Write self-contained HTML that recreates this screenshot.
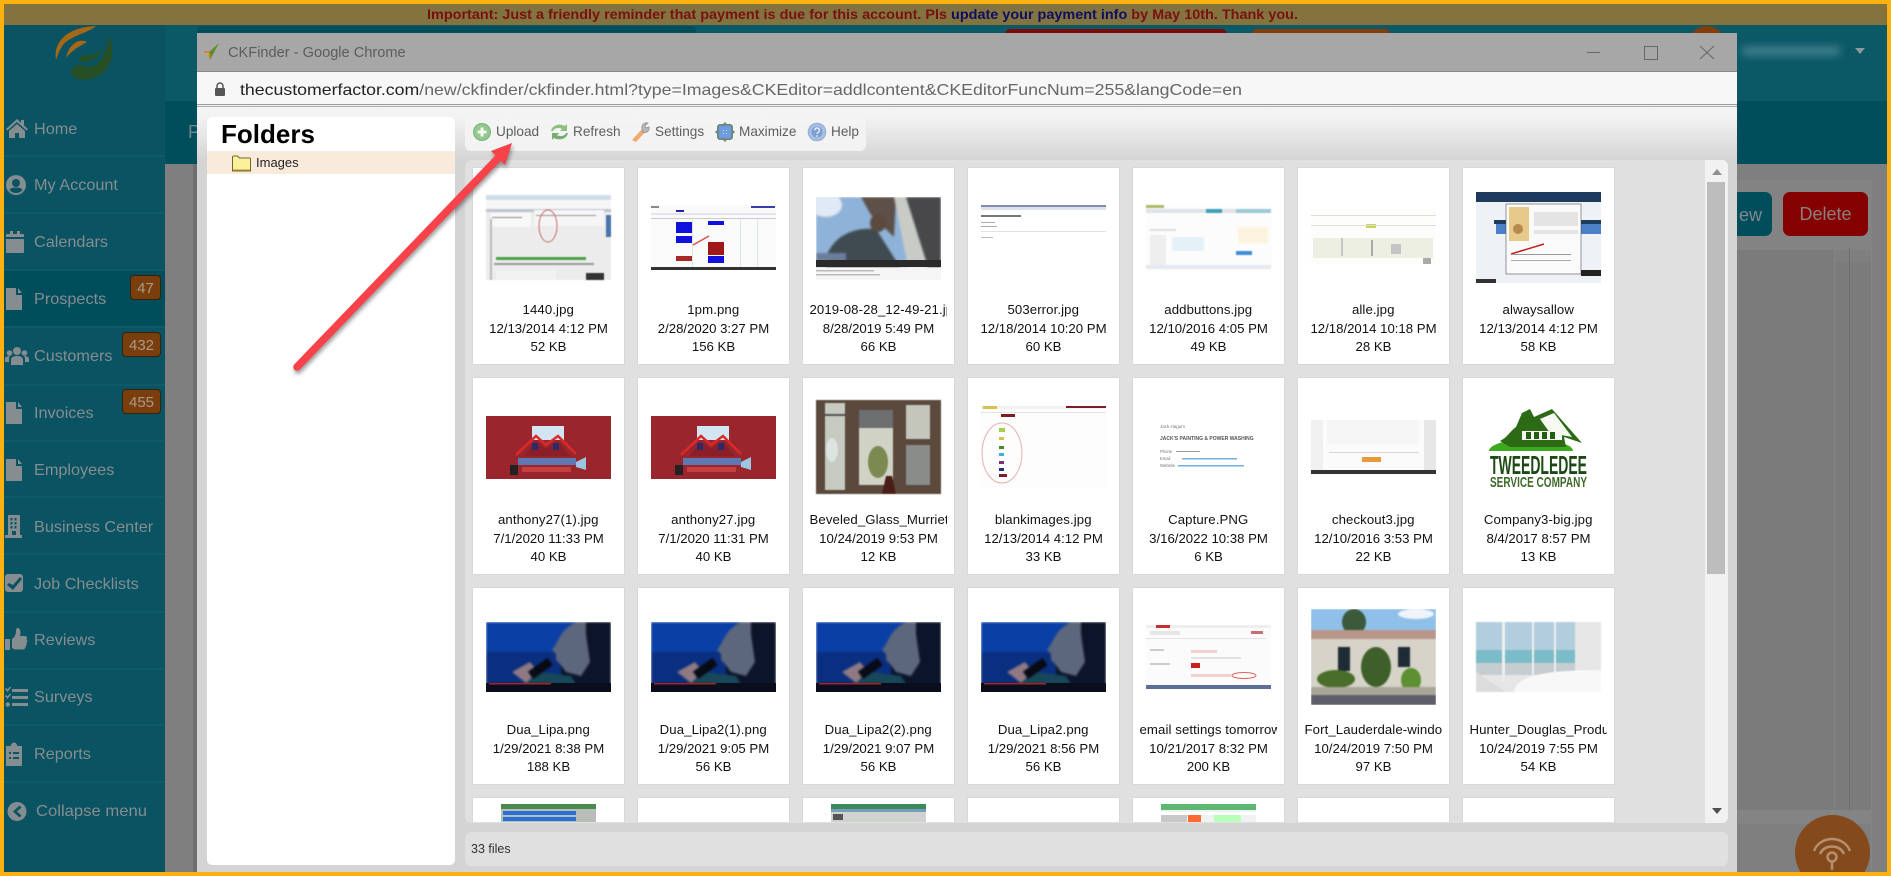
<!DOCTYPE html>
<html><head><meta charset="utf-8"><title>CKFinder</title>
<style>
html,body{margin:0;padding:0;width:1891px;height:876px;overflow:hidden;background:#7f7f7f;font-family:"Liberation Sans",sans-serif}
.a{position:absolute}
#root{position:absolute;left:0;top:0;width:1891px;height:876px;overflow:hidden}
.nav{position:absolute;left:34px;font-size:16px;line-height:20px;color:#858d90;white-space:nowrap;transform:scaleX(1.015);transform-origin:left}
.sep{position:absolute;left:4px;width:161px;height:2px;background:#0e5a69}
.ic{position:absolute;left:5px;width:24px;height:24px;fill:#858d90}
.bd{position:absolute;background:#7a3e0c;border:1px solid #33240e;border-radius:4px;color:#a89a8a;font-size:15px;line-height:25px;text-align:center;box-sizing:border-box;height:25px}
.tb{position:absolute;top:124px;font-size:13.6px;line-height:16px;color:#5e5e5e;white-space:nowrap}
.c{position:absolute;width:151.5px;height:196px;background:#fff;box-shadow:0 0 0 .5px #d0d0d0;text-align:center;font-size:13.2px;color:#111;line-height:16px}
.c svg{position:absolute;left:13.5px}
.r4{height:26px;overflow:hidden}
.n{position:absolute;left:7px;width:137.5px;top:134px;white-space:nowrap;overflow:hidden;letter-spacing:.1px}
.d{position:absolute;left:0;width:152px;top:153px;white-space:nowrap}
.s{position:absolute;left:0;width:152px;top:171px}
</style></head>
<body><div id="root">
<!-- page behind -->
<div class="a" style="left:0;top:0;width:1891px;height:876px;background:#7f7f7f"></div>
<div class="a" style="left:4px;top:25px;width:1883px;height:76px;background:#0b5867"></div>
<div class="a" style="left:165px;top:101px;width:1722px;height:63px;background:#004d5c"></div>
<div class="a" style="left:4px;top:25px;width:161px;height:847px;background:#0a5362"></div>
<div class="a" style="left:197px;top:26px;width:499px;height:8px;background:#004d5c;border-radius:4px 4px 0 0"></div>
<div class="a" style="left:1005px;top:29px;width:222px;height:6px;background:#7c0b0b;border-radius:5px 5px 0 0"></div>
<div class="a" style="left:1252px;top:29px;width:138px;height:6px;background:#843c08;border-radius:5px 5px 0 0"></div>
<div class="a" style="left:1688px;top:26px;width:38px;height:38px;background:#843c08;border-radius:50%"></div>
<div class="a" style="left:1742px;top:46px;width:98px;height:10px;background:#3d7c88;filter:blur(4px)"></div>
<svg class="a" style="left:1854px;top:47px" width="12" height="8"><path d="M1 1H11L6 7Z" fill="#8f9a9e"/></svg>
<div class="a" style="left:188px;top:122px;font-size:18px;line-height:20px;color:#71878d">P</div>
<!-- right side of page -->
<div class="a" style="left:1737px;top:180px;width:135px;height:70px;background:#838383"></div>
<div class="a" style="left:1737px;top:250px;width:98px;height:12px;background:#7b7b7b"></div>
<div class="a" style="left:1737px;top:262px;width:135px;height:550px;background:#7b7b7b"></div>
<div class="a" style="left:1834px;top:248px;width:1px;height:560px;background:#858585"></div>
<div class="a" style="left:1849px;top:248px;width:1px;height:624px;background:#6f6f6f"></div>
<div class="a" style="left:1871px;top:248px;width:1px;height:624px;background:#858585"></div>
<div class="a" style="left:1737px;top:810px;width:135px;height:14px;background:#848484"></div>
<div class="a" style="left:1700px;top:192px;width:72px;height:44px;background:#004d5c;border-radius:7px"></div>
<div class="a" style="left:1737px;top:204px;font-size:18px;line-height:22px;width:25px;text-align:right;color:#80898b;overflow:hidden;white-space:nowrap">ew</div>
<div class="a" style="left:1783px;top:192px;width:85px;height:44px;background:#850000;border-radius:7px;color:#8f7f7f;font-size:18px;line-height:44px;text-align:center">Delete</div>
<!-- left column shading -->
<div class="a" style="left:193px;top:164px;width:4px;height:708px;background:#6e6e6e"></div>
<!-- logo -->
<svg class="a" style="left:0;top:0" width="130" height="90">
<path d="M56 60C53 42 67 27 96 26C88 33 70 36 63 45C60 49 58 54 56 60Z" fill="#a56817"/>
<path d="M66 58C68 46 78 37 87 42C80 46 72 50 66 58Z" fill="#a56817"/>
<path d="M108 35C116 50 113 68 98 76C88 82 72 81 71 72C71 66 78 63 84 66C96 70 108 56 108 35Z" fill="#254f24"/>
<path d="M102 48C100 58 92 62 82 62C78 61 78 56 84 55C92 56 98 54 102 48Z" fill="#254f24"/>
</svg>
<!-- sidebar -->
<div class="a" style="left:4px;top:270px;width:161px;height:56px;background:#004d5c"></div>
<div class="sep" style="top:155px"></div><div class="sep" style="top:212px"></div><div class="sep" style="top:269px"></div><div class="sep" style="top:326px"></div><div class="sep" style="top:384px"></div><div class="sep" style="top:440px"></div><div class="sep" style="top:496px"></div><div class="sep" style="top:553px"></div><div class="sep" style="top:611px"></div><div class="sep" style="top:668px"></div><div class="sep" style="top:724px"></div><div class="sep" style="top:781px"></div>

<svg class="ic" style="top:116px" viewBox="0 0 24 24"><path d="M12 3L1 13l1.500 1.500L12 6l9.500 8.500L23 13l-4-3.600V4h-3v2.700zM4 15v7h6v-5h4v5h6v-7l-8-7z"/></svg>
<svg class="ic" style="top:173px;left:4px" viewBox="0 0 24 24"><path fill-rule="evenodd" d="M12 2a10 10 0 100 20 10 10 0 000-20zm0 4a4 4 0 110 8 4 4 0 010-8zM5.500 17c1-2 3.500-2.500 6.500-2.500s5.500.5 6.500 2.500a8.500 8.500 0 01-13 0z"/></svg>
<svg class="ic" style="top:230px" viewBox="0 0 24 24"><path d="M1 9h18v13a1 1 0 01-1 1H2a1 1 0 01-1-1zM1 7V5a1 1 0 011-1h3V1h3v3h4V1h3v3h3a1 1 0 011 1v2z"/></svg>
<svg class="ic" style="top:287px" viewBox="0 0 24 24"><path d="M1 1h10v7h6v15H1zM13 1l4 5h-4z"/></svg>
<svg class="ic" style="top:345px" viewBox="0 0 24 24"><circle cx="12" cy="6" r="4"/><circle cx="4.500" cy="8" r="2.800"/><circle cx="19.500" cy="8" r="2.800"/><path d="M6 20v-5c0-3 3-4 6-4s6 1 6 4v5zM0 17v-3c0-2 2-3 5-3-1 1-1 2-1 6zM24 17v-3c0-2-2-3-5-3 1 1 1 2 1 6z"/></svg>
<svg class="ic" style="top:401px" viewBox="0 0 24 24"><path d="M1 1h10v7h6v15H1zM13 1l4 5h-4z"/></svg>
<svg class="ic" style="top:458px" viewBox="0 0 24 24"><path d="M1 1h10v7h6v15H1zM13 1l4 5h-4z"/></svg>
<svg class="ic" style="top:515px" viewBox="0 0 24 24"><path fill-rule="evenodd" d="M3 0h12v20h2v3H0v-3h3zM5.500 3v2.500h2V3zm4 0v2.500h2V3zm-4 4v2.500h2V7zm4 0v2.500h2V7zm-4 4v2.500h2V11zm4 0v2.500h2V11zM7 16v4h4v-4z"/></svg>
<svg class="ic" style="top:571px" viewBox="0 0 24 24"><path fill-rule="evenodd" d="M3 3h12a3 3 0 013 3v12a3 3 0 01-3 3H3a3 3 0 01-3-3V6a3 3 0 013-3zm1 9l-2 2 6 5L17 8l-2-2-7 8z"/></svg>
<svg class="ic" style="top:628px" viewBox="0 0 24 24"><path d="M0 11h5v11H0zM7 11c3-2 4-5 4-8 0-2 1-3 2-3 2 0 3 3 2 8h5c2 0 2.500 2 1.500 3.500 1 1 1 2.500 0 3.500.5 1.500 0 2.500-1 3.500 0 2-1 3-3 3H11c-2 0-3-1-4-1.500z"/></svg>
<svg class="ic" style="top:685px" viewBox="0 0 24 24"><path d="M7 4h16v3H7zM7 11h16v3H7zM7 18h16v3H7z"/><path d="M0 4l1-1 1.500 1.500L5 1.500 6 2.500 2.500 7zM0 11l1-1 1.500 1.500L5 8.500 6 9.500 2.500 14z"/><circle cx="2.800" cy="19.500" r="2.200"/></svg>
<svg class="ic" style="top:742px" viewBox="0 0 24 24"><path fill-rule="evenodd" d="M1 4h4.500c.5-2 2-3.500 3.500-3.500S12 2 12.500 4H17v20H1zM4 10v2h2v-2zm4 0v2h6v-2zm-4 5v2h2v-2zm4 0v2h6v-2z"/></svg>
<svg class="ic" style="top:799px" viewBox="0 0 24 24"><path fill-rule="evenodd" d="M12 3a9.500 9.500 0 100 19 9.500 9.500 0 000-19zm2.500 3.500l2 2-4.500 4 4.500 4-2 2-6.500-6z"/></svg>

<div class="nav" style="top:120px">Home</div>
<div class="nav" style="top:176px">My Account</div>
<div class="nav" style="top:233px">Calendars</div>
<div class="nav" style="top:290px">Prospects</div>
<div class="nav" style="top:347px">Customers</div>
<div class="nav" style="top:404px">Invoices</div>
<div class="nav" style="top:461px">Employees</div>
<div class="nav" style="top:518px">Business Center</div>
<div class="nav" style="top:575px">Job Checklists</div>
<div class="nav" style="top:631px">Reviews</div>
<div class="nav" style="top:688px">Surveys</div>
<div class="nav" style="top:745px">Reports</div>
<div class="nav" style="top:802px;left:36px;transform:scaleX(1.04)">Collapse menu</div>
<div class="bd" style="left:130px;top:275px;width:31px">47</div>
<div class="bd" style="left:122px;top:332px;width:39px">432</div>
<div class="bd" style="left:122px;top:389px;width:39px">455</div>

<!-- chat bubble -->
<div class="a" style="left:1795px;top:815px;width:75px;height:57px;overflow:hidden"><div class="a" style="left:0;top:0;width:75px;height:75px;background:#854a1c;border-radius:50%"></div></div>
<svg class="a" style="left:1810px;top:832px" width="44" height="40" fill="none" stroke="#b58f6f" stroke-width="2.500"><path d="M4 19C10 3 34 3 40 19"/><path d="M10 22C14 12 30 12 34 22"/><circle cx="22" cy="25" r="4.500"/><path d="M22 30V38"/></svg>

<!-- notice bar -->
<div class="a" style="left:4px;top:4px;width:1883px;height:21px;background:#83733f"></div>
<svg class="a" style="left:0;top:0" width="1891" height="30"><text x="427" y="19" font-family="'Liberation Sans',sans-serif" font-size="13.500" font-weight="700" fill="#7a1010" textLength="871" lengthAdjust="spacingAndGlyphs">Important: Just a friendly reminder that payment is due for this account. Pls <tspan fill="#0c0e62">update your payment info</tspan> by May 10th. Thank you.</text></svg>

<!-- modal -->
<div class="a" style="left:197px;top:33px;width:1540px;height:839px;background:#d4d4d4"></div>
<div class="a" style="left:197px;top:33px;width:1540px;height:39px;background:#a7a7a7"></div>
<div class="a" style="left:197px;top:71px;width:1540px;height:1px;background:#8a8a8a"></div>
<div class="a" style="left:197px;top:72px;width:1540px;height:32px;background:#f7f7f7"></div>
<div class="a" style="left:197px;top:104px;width:1540px;height:1px;background:#9a9a9a"></div>
<div class="a" style="left:197px;top:105px;width:1540px;height:1px;background:#f2f2f2"></div>
<div class="a" style="left:197px;top:106px;width:1540px;height:1px;background:#ababab"></div>
<div class="a" style="left:197px;top:107px;width:1540px;height:55px;background:linear-gradient(#f5f5f5,#f2f2f2 20%,#d3d3d3)"></div>
<!-- title bar -->
<svg class="a" style="left:202px;top:42px" width="20" height="20"><path d="M17 1L8 18 6 11z" fill="#5f8c2a"/><path d="M1 9l7 1-2 3z" fill="#d4762a"/><path d="M6 12l2 6 1-6z" fill="#b98a2a"/><path d="M2 11l5 0 0 2z" fill="#e3b53a"/></svg>
<div class="a" style="left:228px;top:44px;font-size:14.600px;line-height:18px;color:#5c5c5c;white-space:nowrap">CKFinder - Google Chrome</div>
<svg class="a" style="left:1580px;top:40px" width="145" height="24" fill="none" stroke="#666" stroke-width="1"><path d="M7 12.500H20"/><rect x="64.500" y="6.500" width="13" height="13"/><path d="M120 6L134 19M134 6L120 19"/></svg>
<!-- address -->
<svg class="a" style="left:214px;top:81px" width="12" height="16"><path d="M3 7V5a3 3 0 016 0v2" fill="none" stroke="#555" stroke-width="1.500"/><rect x="1" y="7" width="10" height="8" rx="1" fill="#555"/></svg>
<svg class="a" style="left:0;top:70px" width="1300" height="36"><text x="240" y="25" font-family="'Liberation Sans',sans-serif" font-size="16" fill="#666" textLength="1002" lengthAdjust="spacingAndGlyphs"><tspan fill="#222">thecustomerfactor.com</tspan>/new/ckfinder/ckfinder.html?type=Images&amp;CKEditor=addlcontent&amp;CKEditorFuncNum=255&amp;langCode=en</text></svg>
<!-- folders -->
<div class="a" style="left:207px;top:117px;width:248px;height:748px;background:#fff;border-radius:5px"></div>
<div class="a" style="left:221px;top:119px;font-size:26px;line-height:30px;font-weight:700;color:#000">Folders</div>
<div class="a" style="left:207px;top:151px;width:248px;height:23px;background:#f9ebdc"></div>
<svg class="a" style="left:231px;top:153px" width="22" height="20"><path d="M1.500 18V4a1 1 0 011-1h4l2 2h10a1 1 0 011 1v12z" fill="#fbf19c" stroke="#6f6a2a"/><path d="M2 17h17" stroke="#b39a2a"/></svg>
<div class="a" style="left:256px;top:155px;font-size:13px;line-height:16px;color:#222">Images</div>
<!-- toolbar -->
<div class="a" style="left:465px;top:116px;width:401px;height:35px;background:#f3f3f3;opacity:.95;border-radius:6px"></div>
<svg class="a" style="left:472px;top:122px" width="20" height="20"><circle cx="10" cy="10" r="8.500" fill="#93c98f" stroke="#7cb37c"/><path d="M10 5.500v9M5.500 10h9" stroke="#f1f8ef" stroke-width="3"/></svg>
<div class="tb" style="left:496px">Upload</div>
<svg class="a" style="left:549px;top:122px" width="21" height="20"><path d="M2 9C3 3 11 1 16 4l2-2v7h-7l2-2C10 5 5 6 4 9z" fill="#8cc080"/><path d="M19 11C18 17 10 19 5 16l-2 2v-7h7l-2 2c3 2 8 1 9-2z" fill="#79ad72"/></svg>
<div class="tb" style="left:573px">Refresh</div>
<svg class="a" style="left:630px;top:121px" width="22" height="22"><path d="M2 19L13 7l3 3L6 21z" fill="#f3a86e"/><path d="M12 8c-1-4 2-7 6-6l-3 3 1 2 3-1c1 3-2 7-6 5z" fill="#b8b8b8" stroke="#8a8a8a" stroke-width=".7"/></svg>
<div class="tb" style="left:655px">Settings</div>
<svg class="a" style="left:715px;top:122px" width="20" height="20"><path d="M10 0l2 2h4l2 2v4l2 2-2 2v4l-2 2h-4l-2 2-2-2H4l-2-2v-4L0 10l2-2V4l2-2h4z" fill="#6f8a84"/><rect x="4" y="4" width="12" height="12" fill="#6f9ce0"/><path d="M8 8h1v1H8zM11 8h1v1h-1zM8 11h1v1H8zM11 11h1v1h-1z" fill="#cfe0fa"/></svg>
<div class="tb" style="left:739px">Maximize</div>
<svg class="a" style="left:807px;top:122px" width="20" height="20"><circle cx="10" cy="10" r="8.800" fill="#a6c0e2" stroke="#8fadd4"/><circle cx="10" cy="10" r="5.500" fill="#7d9fcf"/><path d="M7.800 8.200a2.300 2.300 0 113.500 2c-.8.500-1.300.9-1.300 1.800" fill="none" stroke="#e9f0fa" stroke-width="1.400"/><circle cx="10" cy="14" r=".9" fill="#e9f0fa"/></svg>
<div class="tb" style="left:831px">Help</div>
<!-- files panel -->
<div class="a" style="left:465px;top:160px;width:1263px;height:663px;background:#e0e0e0;border-radius:6px;overflow:hidden">
<div class="a" style="left:1240px;top:0;width:23px;height:663px;background:#f1f1f1"></div>
<div class="a" style="left:1242px;top:22px;width:18px;height:392px;background:#bdbdbd"></div>
<svg class="a" style="left:1246px;top:8px" width="12" height="8"><path d="M1 7L6 1 11 7Z" fill="#8f8f8f"/></svg>
<svg class="a" style="left:1246px;top:647px" width="12" height="8"><path d="M1 1L6 7 11 1Z" fill="#505050"/></svg>
</div>
<div class="a" style="left:465px;top:160px;width:1240px;height:662px;overflow:hidden">

<!-- ROW 1 -->
<div class="c" style="left:7.500px;top:8px"><svg style="top:27px;filter:blur(.4px)" width="125" height="85"><rect width="125" height="85" fill="#ececec"/><rect width="125" height="5" fill="#cfdcea"/><rect y="5" width="125" height="9" fill="#f6f6f6"/><rect x="0" y="14" width="125" height="3" fill="#bfc6ce"/><rect x="5" y="18" width="40" height="14" fill="#f8f8f8"/><rect x="48" y="15" width="70" height="16" fill="#f5f5f5"/><rect x="50" y="20" width="60" height="1" fill="#999"/><rect x="6" y="22" width="30" height="1" fill="#888"/><ellipse cx="62" cy="31" rx="9" ry="16" fill="none" stroke="#c96a6a" stroke-width="1"/><rect x="120" y="20" width="5" height="22" fill="#4a74ac"/><rect x="4" y="24" width="2" height="61" fill="#bbb"/><rect x="10" y="62" width="90" height="3" fill="#4aa14a"/><rect x="8" y="68" width="100" height="2" fill="#999"/><rect x="10" y="75" width="60" height="10" fill="#f2f2f2"/><rect x="100" y="78" width="18" height="7" fill="#333"/></svg><div class="n">1440.jpg</div><div class="d">12/13/2014 4:12 PM</div><div class="s">52 KB</div></div>
<div class="c" style="left:172.500px;top:8px"><svg style="top:37px" width="125" height="65"><rect width="125" height="65" fill="#fafafa"/><rect x="100" y="1" width="24" height="2" fill="#3c3ca8"/><rect x="0" y="1" width="8" height="2" fill="#888"/><rect x="25" y="5" width="8" height="2" fill="#2222aa"/><rect y="8" width="125" height="2" fill="#e4e4ee"/><rect y="13" width="125" height="1" fill="#ccc"/><rect x="25" y="17" width="16" height="11" fill="#1111dd"/><rect x="25" y="31" width="16" height="7" fill="#1111dd"/><rect x="57" y="16" width="16" height="4" fill="#1111dd"/><rect x="57" y="37" width="16" height="13" fill="#a01818"/><rect x="57" y="51" width="16" height="7" fill="#1111dd"/><rect x="25" y="51" width="16" height="5" fill="#a82828"/><rect x="41" y="14" width="1" height="48" fill="#dde8dd"/><rect x="89" y="14" width="1" height="48" fill="#dde8dd"/><rect x="106" y="14" width="1" height="48" fill="#dde8dd"/><rect y="62" width="125" height="3" fill="#333"/><path d="M42 40L58 31" stroke="#e05050" stroke-width="1.500"/></svg><div class="n">1pm.png</div><div class="d">2/28/2020 3:27 PM</div><div class="s">156 KB</div></div>
<div class="c" style="left:337.500px;top:8px"><svg style="top:29px" width="125" height="83"><g style="filter:blur(1px)"><rect width="125" height="70" fill="#8fb2d8"/><ellipse cx="10" cy="8" rx="16" ry="12" fill="#dfeaf5"/><path d="M45 0H80L78 40 55 18z" fill="#5d5048"/><path d="M78 0H90L112 70H92z" fill="#c9cbc6"/><path d="M90 0H125V70H112z" fill="#48484a"/><path d="M10 60C18 38 38 30 60 32L84 70H10z" fill="#3f4b50"/><ellipse cx="62" cy="26" rx="8" ry="9" fill="#5a4a40"/><rect x="0" y="56" width="30" height="8" fill="#6b7f9c"/></g><rect y="63" width="125" height="7" fill="#2a2a2a"/><rect y="71" width="125" height="12" fill="#f5f5f5"/><rect y="73" width="58" height="1.500" fill="#bbb"/><rect y="77" width="64" height="1.500" fill="#bbb"/></svg><div class="n">2019-08-28_12-49-21.jpg</div><div class="d">8/28/2019 5:49 PM</div><div class="s">66 KB</div></div>
<div class="c" style="left:502.500px;top:8px"><svg style="top:37px" width="125" height="40"><rect width="125" height="2" fill="#5f6f9a" opacity=".8"/><rect y="2" width="125" height="3" fill="#dbe2ec"/><rect y="10" width="40" height="2" fill="#777"/><rect y="17" width="14" height="1" fill="#aaa"/><rect y="21" width="16" height="1" fill="#aaa"/><rect y="26" width="125" height="1" fill="#e2e2e2"/><rect y="32" width="12" height="1" fill="#bbb"/></svg><div class="n">503error.jpg</div><div class="d">12/18/2014 10:20 PM</div><div class="s">60 KB</div></div>
<div class="c" style="left:667.500px;top:8px"><svg style="top:37px;filter:blur(.4px)" width="125" height="65"><rect width="125" height="65" fill="#fcfcfc"/><rect x="0" width="18" height="3" fill="#a8bc6a"/><rect y="4" width="125" height="4" fill="#dfe3e8"/><rect x="60" y="4" width="16" height="4" fill="#3fa0b8"/><rect x="90" y="4" width="35" height="4" fill="#9ccad6"/><rect x="4" y="24" width="26" height="2" fill="#ddd"/><rect x="4" y="30" width="16" height="30" fill="#eeeeee"/><rect x="26" y="32" width="32" height="14" fill="#e4f2f8"/><rect x="92" y="22" width="30" height="16" fill="#fdf4de"/><rect x="90" y="46" width="16" height="4" fill="#3f90d8"/><rect y="60" width="125" height="4" fill="#e4eaef"/></svg><div class="n">addbuttons.jpg</div><div class="d">12/10/2016 4:05 PM</div><div class="s">49 KB</div></div>
<div class="c" style="left:832.500px;top:8px"><svg style="top:42px" width="125" height="54"><rect width="125" height="54" fill="#fdfdfb"/><rect y="5" width="125" height="1" fill="#ddd"/><rect x="55" y="14" width="10" height="4" fill="#c8d45a"/><rect y="15" width="125" height="1" fill="#ddd"/><rect x="2" y="28" width="120" height="20" fill="#edefe2"/><rect x="30" y="28" width="2" height="18" fill="#c6c6c6"/><rect x="60" y="30" width="2" height="16" fill="#aaa"/><rect x="80" y="34" width="10" height="10" fill="#c4c4c4"/><rect x="112" y="48" width="8" height="6" fill="#aaa"/></svg><div class="n">alle.jpg</div><div class="d">12/18/2014 10:18 PM</div><div class="s">28 KB</div></div>
<div class="c" style="left:997.500px;top:8px"><svg style="top:24px;filter:blur(.3px)" width="125" height="91"><rect width="125" height="91" fill="#eef2f7"/><rect width="125" height="10" fill="#1e3a5c"/><rect x="18" y="28" width="107" height="4" fill="#1e3a5c"/><rect x="20" y="32" width="105" height="10" fill="#4a80c8"/><rect x="30" y="12" width="75" height="70" fill="#fafafa" stroke="#555" stroke-width=".6"/><rect x="33" y="15" width="20" height="34" fill="#e8c98c"/><circle cx="42" cy="37" r="5" fill="#b58a4a"/><rect x="58" y="20" width="44" height="14" fill="#e4e4e4"/><rect x="58" y="38" width="44" height="4" fill="#e4e4e4"/><path d="M35 62L68 52" stroke="#c02020" stroke-width="1.500"/><rect x="35" y="62" width="60" height="1" fill="#999"/><rect x="35" y="68" width="60" height="1" fill="#aaa"/><rect y="87" width="20" height="4" fill="#333"/><rect x="105" y="78" width="20" height="6" fill="#222"/></svg><div class="n">alwaysallow</div><div class="d">12/13/2014 4:12 PM</div><div class="s">58 KB</div></div>

<!-- ROW 2 -->
<div class="c" style="left:7.500px;top:218px"><svg style="top:38px" width="125" height="63"><rect width="125" height="63" fill="#98262c"/><path d="M46 10h32v14H46z" fill="#d3e5f3" rx="6"/><path d="M30 39L50 20 60 29 72 20 90 38" fill="none" stroke="#e02828" stroke-width="2.500"/><path d="M38 40L50 25 60 33 72 25 84 40z" fill="#8a1f2a"/><rect x="46" y="27" width="6" height="7" fill="#2b2a6a"/><rect x="67" y="27" width="6" height="7" fill="#2b2a6a"/><rect x="32" y="42" width="58" height="7" fill="#5e78b4"/><rect x="36" y="51" width="49" height="5" fill="#c54040"/><path d="M90 46l10-5v13l-10-3z" fill="#9cc6e0"/><rect x="24" y="49" width="8" height="10" fill="#222"/></svg><div class="n">anthony27(1).jpg</div><div class="d">7/1/2020 11:33 PM</div><div class="s">40 KB</div></div>
<div class="c" style="left:172.500px;top:218px"><svg style="top:38px" width="125" height="63"><rect width="125" height="63" fill="#98262c"/><path d="M46 10h32v14H46z" fill="#d3e5f3" rx="6"/><path d="M30 39L50 20 60 29 72 20 90 38" fill="none" stroke="#e02828" stroke-width="2.500"/><path d="M38 40L50 25 60 33 72 25 84 40z" fill="#8a1f2a"/><rect x="46" y="27" width="6" height="7" fill="#2b2a6a"/><rect x="67" y="27" width="6" height="7" fill="#2b2a6a"/><rect x="32" y="42" width="58" height="7" fill="#5e78b4"/><rect x="36" y="51" width="49" height="5" fill="#c54040"/><path d="M90 46l10-5v13l-10-3z" fill="#9cc6e0"/><rect x="24" y="49" width="8" height="10" fill="#222"/></svg><div class="n">anthony27.jpg</div><div class="d">7/1/2020 11:31 PM</div><div class="s">40 KB</div></div>
<div class="c" style="left:337.500px;top:218px"><svg style="top:22px;filter:blur(.6px)" width="125" height="94"><rect width="125" height="94" fill="#5a493c"/><rect x="9" y="3" width="20" height="87" fill="#c6cac0"/><rect x="9" y="14" width="20" height="2" fill="#555"/><rect x="43" y="10" width="34" height="75" fill="#d0d2c6"/><rect x="43" y="10" width="34" height="18" fill="#6c6e70"/><rect x="90" y="5" width="24" height="34" fill="#c4c6bc"/><rect x="90" y="45" width="24" height="40" fill="#8a8c8a"/><ellipse cx="62" cy="62" rx="10" ry="16" fill="#7c8a52"/><ellipse cx="16" cy="50" rx="6" ry="12" fill="#dbe4e0"/><path d="M66 94l4-18 6 0 4 18z" fill="#4a1e16"/></svg><div class="n">Beveled_Glass_Murrieta.jpg</div><div class="d">10/24/2019 9:53 PM</div><div class="s">12 KB</div></div>
<div class="c" style="left:502.500px;top:218px"><svg style="top:28px" width="125" height="81"><rect width="125" height="81" fill="#fdfdfd"/><rect width="125" height="3" fill="#f1f1f1"/><rect x="2" y="0" width="14" height="3" fill="#d8c050"/><rect x="20" y="8" width="14" height="3" fill="#7c1c2a"/><rect x="85" y="0" width="40" height="2" fill="#7c1c2a"/><rect y="6" width="125" height="1" fill="#e3e3e3"/><ellipse cx="21" cy="47" rx="20" ry="30" fill="none" stroke="#e6b0b0" stroke-width="1"/><rect x="18" y="22" width="6" height="4" fill="#a8d048"/><rect x="18" y="31" width="5" height="3" fill="#d8c050"/><rect x="18" y="40" width="5" height="3" fill="#4a8a2a"/><rect x="18" y="47" width="5" height="3" fill="#3fb0d0"/><rect x="18" y="55" width="5" height="3" fill="#803070"/><rect x="18" y="62" width="5" height="3" fill="#20307a"/><rect x="18" y="68" width="8" height="3" fill="#7c1c2a"/></svg><div class="n">blankimages.jpg</div><div class="d">12/13/2014 4:12 PM</div><div class="s">33 KB</div></div>
<div class="c" style="left:667.500px;top:218px"><svg style="top:42px" width="125" height="52" font-family="Liberation Sans,sans-serif"><text x="14" y="8" font-size="4.500" fill="#777">Jack Hagum</text><text x="14" y="20" font-size="5" font-weight="700" fill="#555">JACK'S PAINTING &amp; POWER WASHING</text><text x="14" y="33" font-size="4.200" fill="#777">Phone</text><text x="14" y="40" font-size="4.200" fill="#777">Email</text><text x="14" y="47" font-size="4.200" fill="#777">Website</text><rect x="36" y="38" width="55" height="1.500" fill="#72aee0"/><rect x="32" y="45" width="66" height="1.500" fill="#72aee0"/><rect x="30" y="31" width="24" height="1" fill="#999"/></svg><div class="n">Capture.PNG</div><div class="d">3/16/2022 10:38 PM</div><div class="s">6 KB</div></div>
<div class="c" style="left:832.500px;top:218px"><svg style="top:42px" width="125" height="55"><rect width="125" height="50" fill="#fbfbfb"/><rect x="0" width="12" height="50" fill="#f0f0f0"/><rect x="16" y="0" width="92" height="24" fill="#f6f6f6"/><rect x="113" width="12" height="50" fill="#e6e6e6"/><rect x="18" y="32" width="90" height="1" fill="#d5d5d5"/><rect x="51" y="37" width="19" height="5" fill="#e89a3a"/><rect y="50" width="125" height="4" fill="#333"/></svg><div class="n">checkout3.jpg</div><div class="d">12/10/2016 3:53 PM</div><div class="s">22 KB</div></div>
<div class="c" style="left:997.500px;top:218px"><svg style="top:27px" width="125" height="86"><ellipse cx="55" cy="46" rx="42" ry="12" fill="#3ea81e"/><rect x="10" y="46" width="100" height="14" fill="#fff"/><path d="M24 36C32 32 34 26 40 22L46 8 54 4 58 12 76 4 106 38 88 32 90 42 34 42z" fill="#2c6a16"/><path d="M64 14L78 8 96 32 74 28z" fill="#f7faf2"/><rect x="46" y="26" width="40" height="9" fill="#f4f8ee"/><path d="M50 27h5v7h-5zM58 27h5v7h-5zM66 27h5v7h-5zM74 27h5v7h-5z" fill="#255c14"/><text x="62.500" y="69" text-anchor="middle" font-family="Liberation Sans,sans-serif" font-weight="700" font-size="26" fill="#1d4a14" textLength="97" lengthAdjust="spacingAndGlyphs">TWEEDLEDEE</text><text x="62.500" y="82" text-anchor="middle" font-family="Liberation Sans,sans-serif" font-weight="700" font-size="15" fill="#3f6a2a" textLength="97" lengthAdjust="spacingAndGlyphs">SERVICE COMPANY</text></svg><div class="n">Company3-big.jpg</div><div class="d">8/4/2017 8:57 PM</div><div class="s">13 KB</div></div>

<!-- ROW 3 -->
<div class="c" style="left:7.500px;top:428px"><svg style="top:34px" width="125" height="70"><g style="filter:blur(1px)"><rect width="125" height="70" fill="#0b1a3c"/><rect width="90" height="32" fill="#0a3fa6"/><rect y="30" width="75" height="32" fill="#0a2e80"/><path d="M125 0H90C78 8 72 20 70 30L78 55 100 70H125z" fill="#0b1428"/><path d="M90 0C78 6 74 14 70 22L66 28 70 32 70 38 74 42 80 50 95 54 104 40 100 12 100 0z" fill="#5c667c"/><path d="M38 62L55 50 85 54 90 62z" fill="#17485a"/><path d="M26 50L44 40 52 50 40 61z" fill="#8f7a84"/><rect x="42" y="42" width="24" height="9" fill="#080a14" transform="rotate(-35 54 46)"/></g><rect y="61" width="125" height="9" fill="#0a0e1c"/><rect x="3" y="61" width="62" height="1.500" fill="#b02020"/></svg><div class="n">Dua_Lipa.png</div><div class="d">1/29/2021 8:38 PM</div><div class="s">188 KB</div></div>
<div class="c" style="left:172.500px;top:428px"><svg style="top:34px" width="125" height="70"><g style="filter:blur(1px)"><rect width="125" height="70" fill="#0b1a3c"/><rect width="90" height="32" fill="#0a3fa6"/><rect y="30" width="75" height="32" fill="#0a2e80"/><path d="M125 0H90C78 8 72 20 70 30L78 55 100 70H125z" fill="#0b1428"/><path d="M90 0C78 6 74 14 70 22L66 28 70 32 70 38 74 42 80 50 95 54 104 40 100 12 100 0z" fill="#5c667c"/><path d="M38 62L55 50 85 54 90 62z" fill="#17485a"/><path d="M26 50L44 40 52 50 40 61z" fill="#8f7a84"/><rect x="42" y="42" width="24" height="9" fill="#080a14" transform="rotate(-35 54 46)"/></g><rect y="61" width="125" height="9" fill="#0a0e1c"/><rect x="3" y="61" width="62" height="1.500" fill="#b02020"/></svg><div class="n">Dua_Lipa2(1).png</div><div class="d">1/29/2021 9:05 PM</div><div class="s">56 KB</div></div>
<div class="c" style="left:337.500px;top:428px"><svg style="top:34px" width="125" height="70"><g style="filter:blur(1px)"><rect width="125" height="70" fill="#0b1a3c"/><rect width="90" height="32" fill="#0a3fa6"/><rect y="30" width="75" height="32" fill="#0a2e80"/><path d="M125 0H90C78 8 72 20 70 30L78 55 100 70H125z" fill="#0b1428"/><path d="M90 0C78 6 74 14 70 22L66 28 70 32 70 38 74 42 80 50 95 54 104 40 100 12 100 0z" fill="#5c667c"/><path d="M38 62L55 50 85 54 90 62z" fill="#17485a"/><path d="M26 50L44 40 52 50 40 61z" fill="#8f7a84"/><rect x="42" y="42" width="24" height="9" fill="#080a14" transform="rotate(-35 54 46)"/></g><rect y="61" width="125" height="9" fill="#0a0e1c"/><rect x="3" y="61" width="62" height="1.500" fill="#b02020"/></svg><div class="n">Dua_Lipa2(2).png</div><div class="d">1/29/2021 9:07 PM</div><div class="s">56 KB</div></div>
<div class="c" style="left:502.500px;top:428px"><svg style="top:34px" width="125" height="70"><g style="filter:blur(1px)"><rect width="125" height="70" fill="#0b1a3c"/><rect width="90" height="32" fill="#0a3fa6"/><rect y="30" width="75" height="32" fill="#0a2e80"/><path d="M125 0H90C78 8 72 20 70 30L78 55 100 70H125z" fill="#0b1428"/><path d="M90 0C78 6 74 14 70 22L66 28 70 32 70 38 74 42 80 50 95 54 104 40 100 12 100 0z" fill="#5c667c"/><path d="M38 62L55 50 85 54 90 62z" fill="#17485a"/><path d="M26 50L44 40 52 50 40 61z" fill="#8f7a84"/><rect x="42" y="42" width="24" height="9" fill="#080a14" transform="rotate(-35 54 46)"/></g><rect y="61" width="125" height="9" fill="#0a0e1c"/><rect x="3" y="61" width="62" height="1.500" fill="#b02020"/></svg><div class="n">Dua_Lipa2.png</div><div class="d">1/29/2021 8:56 PM</div><div class="s">56 KB</div></div>
<div class="c" style="left:667.500px;top:428px"><svg style="top:37px" width="125" height="64"><rect width="125" height="64" fill="#fbfbfb"/><rect width="125" height="3" fill="#eee"/><rect x="10" y="0" width="14" height="3" fill="#c83030"/><rect x="4" y="6" width="30" height="4" fill="#e6e6e6"/><rect x="105" y="6" width="12" height="3" fill="#c87070"/><rect y="13" width="120" height="1" fill="#e2e2e2"/><rect x="45" y="25" width="26" height="3" fill="#f3d0d0"/><rect x="45" y="32" width="50" height="2" fill="#e2e2e2"/><rect x="45" y="38" width="9" height="5" fill="#cc2020"/><rect x="45" y="49" width="40" height="3" fill="#f3d0d0"/><ellipse cx="98" cy="50.500" rx="12" ry="3" fill="none" stroke="#e06060"/><rect x="4" y="24" width="14" height="2" fill="#ccc"/><rect x="4" y="38" width="20" height="2" fill="#ccc"/><rect y="60" width="125" height="4" fill="#5c6e98"/></svg><div class="n">email settings tomorrow.jpg</div><div class="d">10/21/2017 8:32 PM</div><div class="s">200 KB</div></div>
<div class="c" style="left:832.500px;top:428px"><svg style="top:21px" width="125" height="96"><g style="filter:blur(.8px)"><rect width="125" height="22" fill="#8fc0ea"/><ellipse cx="105" cy="5" rx="18" ry="5" fill="#eef4fa"/><ellipse cx="43" cy="13" rx="12" ry="13" fill="#3a5a3a"/><rect y="21" width="125" height="9" fill="#b8968a"/><rect y="30" width="125" height="48" fill="#d6d3c8"/><rect x="27" y="38" width="12" height="24" fill="#1e2a34"/><rect x="87" y="38" width="12" height="20" fill="#1e2a34"/><ellipse cx="65" cy="58" rx="15" ry="20" fill="#3f5f2a"/><ellipse cx="25" cy="70" rx="19" ry="9" fill="#4a6e2a"/><ellipse cx="100" cy="71" rx="10" ry="12" fill="#5c9030"/><rect y="78" width="125" height="10" fill="#a9a698"/><rect y="86" width="125" height="10" fill="#5e5e6a"/></g></svg><div class="n">Fort_Lauderdale-windows.jpg</div><div class="d">10/24/2019 7:50 PM</div><div class="s">97 KB</div></div>
<div class="c" style="left:997.500px;top:428px"><svg style="top:34px;filter:blur(.6px)" width="125" height="70"><rect width="125" height="70" fill="#e6e6e6"/><path d="M0 0H99V52H0z" fill="#b2cede"/><rect y="28" width="99" height="13" fill="#7cbcc8"/><rect y="41" width="99" height="12" fill="#c6cdd0"/><rect x="26" width="3" height="60" fill="#eeeeee"/><rect x="56" width="2" height="60" fill="#eeeeee"/><rect x="78" width="2" height="56" fill="#eeeeee"/><path d="M38 70C40 56 60 48 125 48V70z" fill="#f8f8f8"/><path d="M0 50L30 70H0z" fill="#dcdcdc"/></svg><div class="n">Hunter_Douglas_Products.jpg</div><div class="d">10/24/2019 7:55 PM</div><div class="s">54 KB</div></div>

<!-- ROW 4 -->
<div class="c r4" style="left:7.500px;top:638px"><svg style="top:6px;left:28.500px" width="95" height="20"><rect width="95" height="20" fill="#b9bdb9"/><rect width="95" height="5" fill="#4a8a4a"/><rect x="2" y="7" width="73" height="4" fill="#2670d8"/><rect x="2" y="13" width="73" height="4" fill="#2670d8"/></svg></div>
<div class="c r4" style="left:172.500px;top:638px"></div>
<div class="c r4" style="left:337.500px;top:638px"><svg style="top:6px;left:28.500px" width="95" height="20"><rect width="95" height="20" fill="#cfd2cf"/><rect width="95" height="5" fill="#3a8a5a"/><rect y="5" width="95" height="3" fill="#3a7ab8" opacity=".6"/><rect x="2" y="10" width="10" height="6" fill="#555"/></svg></div>
<div class="c r4" style="left:502.500px;top:638px"></div>
<div class="c r4" style="left:667.500px;top:638px"><svg style="top:6px;left:28.500px" width="95" height="20"><rect width="95" height="20" fill="#eef2f2"/><rect width="95" height="6" fill="#5cb870"/><rect y="8" width="95" height="3" fill="#fff"/><rect y="11" width="26" height="9" fill="#c8c8c8"/><rect x="27" y="11" width="13" height="9" fill="#ff6a30"/><rect x="53" y="11" width="27" height="9" fill="#b8ffb8"/></svg></div>
<div class="c r4" style="left:832.500px;top:638px"></div>
<div class="c r4" style="left:997.500px;top:638px"></div>
</div>
<!-- status -->
<div class="a" style="left:465px;top:832px;width:1263px;height:34px;background:#e0e0e0;border-radius:6px"></div>
<div class="a" style="left:471px;top:841px;font-size:12.500px;line-height:16px;color:#333">33 files</div>

<!-- red arrow -->
<svg class="a" style="left:280px;top:130px;filter:drop-shadow(1px 3px 2px rgba(0,0,0,.4))" width="250" height="250"><path d="M17 237L222 24" stroke="#f7424a" stroke-width="7.500" stroke-linecap="round"/><path d="M232 13L211 21 225 35Z" fill="#f7424a"/></svg>

<!-- yellow frame -->
<div class="a" style="left:0;top:0;width:1891px;height:4px;background:#fdb111"></div>
<div class="a" style="left:0;top:872px;width:1891px;height:4px;background:#fdb111"></div>
<div class="a" style="left:0;top:0;width:4px;height:876px;background:#fdb111"></div>
<div class="a" style="left:1887px;top:0;width:4px;height:876px;background:#fdb111"></div>
</div></body></html>
